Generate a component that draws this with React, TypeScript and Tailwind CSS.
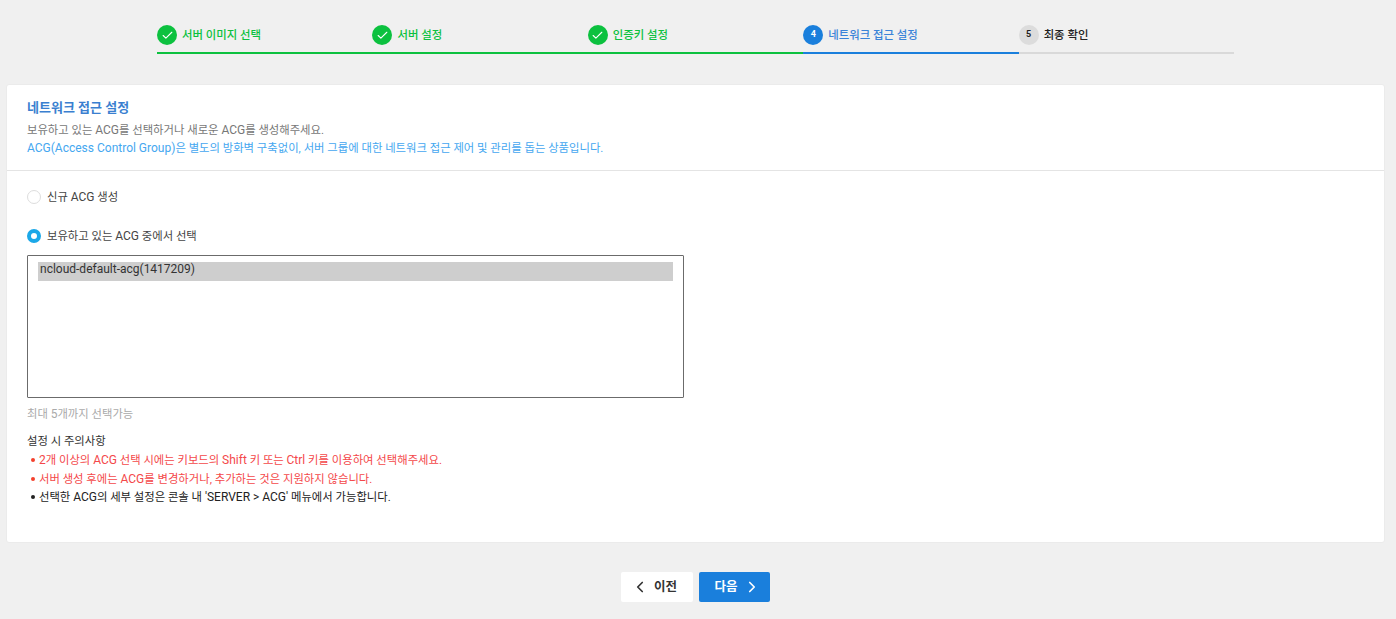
import { Check, ChevronLeft, ChevronRight } from 'lucide-react';

const font = { fontFamily: 'Roboto, "Noto Sans CJK KR", sans-serif' };

const steps = [
  { label: '서버 이미지 선택', state: 'done' },
  { label: '서버 설정', state: 'done' },
  { label: '인증키 설정', state: 'done' },
  { label: '네트워크 접근 설정', state: 'active' },
  { label: '최종 확인', state: 'todo' },
];

// 영문 구간만 살짝 크게 (한글과 크기 차이)
function Mixed({ text }: { text: string }) {
  const parts = text.split(/([A-Za-z0-9()'>]+(?: [A-Za-z0-9()'>]+)*)/);
  return (
    <>
      {parts.map((part, i) =>
        i % 2 === 1 ? (
          <span key={i} className="text-[12px] leading-none">
            {part}
          </span>
        ) : (
          <span key={i}>{part}</span>
        ),
      )}
    </>
  );
}

export default function App() {
  return (
    <div className="min-h-screen h-[619px] bg-[#f0f0f0] overflow-hidden" style={font}>
      {/* 단계 표시 */}
      <div className="flex w-[1077px] ml-[157px] pt-[25px] h-[84px]">
        {steps.map((step, i) => (
          <div
            key={step.label}
            className={`flex-1 h-[29px] flex items-start gap-[5px] border-b-2 ${
              step.state === 'done'
                ? 'border-[#0cc13f]'
                : step.state === 'active'
                  ? 'border-[#1a7fdc]'
                  : 'border-[#d9d9d9]'
            }`}
          >
            {step.state === 'done' && (
              <span className="w-5 h-5 rounded-full bg-[#0cc13f] flex items-center justify-center">
                <Check size={13} color="#fff" strokeWidth={2} />
              </span>
            )}
            {step.state === 'active' && (
              <span className="w-5 h-5 rounded-full bg-[#1a7fdc] flex items-center justify-center text-[9px] font-bold text-white">
                {i + 1}
              </span>
            )}
            {step.state === 'todo' && (
              <span className="w-5 h-5 rounded-full bg-[#dcdcdc] flex items-center justify-center text-[9px] font-bold text-[#222]">
                {i + 1}
              </span>
            )}
            <span
              className={`text-[11.4px] font-medium leading-[20px] ${
                step.state === 'done'
                  ? 'text-[#0cc13f]'
                  : step.state === 'active'
                    ? 'text-[#3a83d8]'
                    : 'text-[#222]'
              }`}
            >
              {step.label}
            </span>
          </div>
        ))}
      </div>

      {/* 본문 카드 */}
      <div className="ml-[6px] w-[1379px] h-[459px] bg-white rounded-[3px] border border-[#ebebeb]">
        <div className="h-[86px] border-b border-[#e4e4e4] pl-5 pt-[13px]">
          <h2 className="text-[13px] font-bold leading-[19px] text-[#3a7fd0]">네트워크 접근 설정</h2>
          <p className="mt-[4px] text-[11.35px] leading-[18px] text-[#777]">
            <Mixed text="보유하고 있는 ACG를 선택하거나 새로운 ACG를 생성해주세요." />
          </p>
          <p className="text-[11.35px] leading-[18px] text-[#45a7f0]">
            <Mixed text="ACG(Access Control Group)은 별도의 방화벽 구축없이, 서버 그룹에 대한 네트워크 접근 제어 및 관리를 돕는 상품입니다." />
          </p>
        </div>

        <div className="pl-5 pt-[18px]">
          <label className="flex items-center gap-[6px] h-[16px]">
            <span className="w-[14px] h-[14px] rounded-full border border-[#ddd] bg-white" />
            <span className="text-[11.35px] leading-[18px] text-[#444]">
              <Mixed text="신규 ACG 생성" />
            </span>
          </label>
          <label className="flex items-center gap-[6px] h-[16px] mt-[23px]">
            <span className="w-[14px] h-[14px] rounded-full border-[4px] border-[#1ba8e8] bg-white" />
            <span className="text-[11.35px] leading-[18px] text-[#444]">
              <Mixed text="보유하고 있는 ACG 중에서 선택" />
            </span>
          </label>

          <div className="mt-[11px] w-[657px] h-[143px] border border-[#6b6b6b] rounded-[1px] pt-[6px] px-[10px]">
            <div className="h-[19px] bg-[#cecece] pl-[2px] text-[12px] leading-[15px] text-[#333]">
              ncloud-default-acg(1417209)
            </div>
          </div>

          <p className="mt-[8px] text-[11.35px] leading-[16px] text-[#aaa]">
            <Mixed text="최대 5개까지 선택가능" />
          </p>

          <p className="mt-[10px] text-[11.35px] leading-[19px] text-[#333]">설정 시 주의사항</p>
          <ul className="text-[11.35px] leading-[18.5px]">
            <li className="flex items-center h-[18.5px] text-[#f4484a]">
              <span className="w-[4px] h-[4px] rounded-full bg-[#f4402c] ml-[4px] mr-[4px]" />
              <span>
                <Mixed text="2개 이상의 ACG 선택 시에는 키보드의 Shift 키 또는 Ctrl 키를 이용하여 선택해주세요." />
              </span>
            </li>
            <li className="flex items-center h-[18.5px] text-[#f4484a]">
              <span className="w-[4px] h-[4px] rounded-full bg-[#f4402c] ml-[4px] mr-[4px]" />
              <span>
                <Mixed text="서버 생성 후에는 ACG를 변경하거나, 추가하는 것은 지원하지 않습니다." />
              </span>
            </li>
            <li className="flex items-center h-[18.5px] text-[#222]">
              <span className="w-[4px] h-[4px] rounded-full bg-[#222] ml-[4px] mr-[4px]" />
              <span>
                <Mixed text="선택한 ACG의 세부 설정은 콘솔 내 'SERVER > ACG' 메뉴에서 가능합니다." />
              </span>
            </li>
          </ul>
        </div>
      </div>

      {/* 이전 / 다음 */}
      <div className="flex justify-center gap-[6px] mt-[29px] pr-[5px]">
        <button className="w-[72px] h-[30px] pr-[6px] bg-white rounded-[2px] flex items-center justify-center gap-[5px] text-[12.5px] font-bold text-[#333]">
          <ChevronLeft size={18} strokeWidth={2.25} />
          이전
        </button>
        <button className="w-[71px] h-[30px] pl-[6px] bg-[#1a7fdc] rounded-[2px] flex items-center justify-center gap-[5px] text-[12.5px] font-bold text-white">
          다음
          <ChevronRight size={18} strokeWidth={2.25} />
        </button>
      </div>
    </div>
  );
}
